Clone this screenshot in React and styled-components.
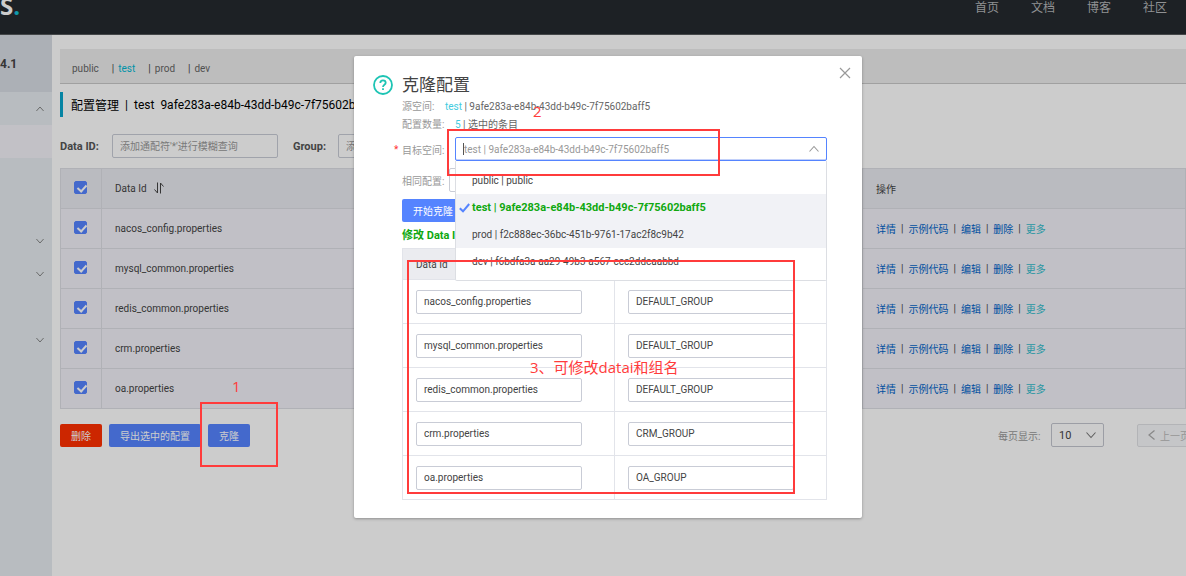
import React, { useState } from 'react'
import styled, { createGlobalStyle } from 'styled-components';

const NAV_LINKS = ['首页', '文档', '博客', '社区'];
const NAMESPACES = ['public', 'test', 'prod', 'dev'];
const SIDE_ITEMS = ['up', 'active', '', '', 'down', 'down', '', 'down'];
const ACTIONS = ['详情', '示例代码', '编辑', '删除'];
const TEST_ID = '9afe283a-e84b-43dd-b49c-7f75602baff5';

const CONFIGS = [
	{ dataId: 'nacos_config.properties', group: 'DEFAULT_GROUP' },
	{ dataId: 'mysql_common.properties', group: 'DEFAULT_GROUP' },
	{ dataId: 'redis_common.properties', group: 'DEFAULT_GROUP' },
	{ dataId: 'crm.properties', group: 'CRM_GROUP' },
	{ dataId: 'oa.properties', group: 'OA_GROUP' },
];

const TARGETS = [
	{ name: 'public', id: 'public' },
	{ name: 'test', id: TEST_ID },
	{ name: 'prod', id: 'f2c888ec-36bc-451b-9761-17ac2f8c9b42' },
	{ name: 'dev', id: 'f6bdfa3a-aa29-49b3-a567-ccc2ddcaabbd' },
];

const Chevron = ({ up, size = 8, color = '#999' }) => (
	<svg width={size} height={size} viewBox="0 0 10 10" fill="none" stroke={color} strokeWidth="1.1">
		<path d={up ? 'M0.5 7.5 5 2.5 9.5 7.5' : 'M0.5 2.5 5 7.5 9.5 2.5'} />
	</svg>
)

const SideMenu = () => (
	<Side>
		<Version>4.1</Version>
		{SIDE_ITEMS.map((kind, index) => (
			<SideItem key={index} $active={kind === 'active'}>
				{(kind === 'up' || kind === 'down') && <Chevron up={kind === 'up'} color="#777" />}
			</SideItem>
		))}
	</Side>
)

const ConfigTable = ({ checked, onToggle, onToggleAll }) => (
	<Table>
		<thead>
			<tr>
				<CheckHead>
					<Checkbox type="checkbox" aria-label="全选" checked={checked.every(Boolean)} onChange={onToggleAll} />
				</CheckHead>
				<th>
					<SortLabel>
						Data Id
						<svg width="10" height="12" viewBox="0 0 10 12" fill="none" stroke="#444" strokeWidth="1">
							<path d="M3.5 0.5V11L0.5 7.5M6.5 11.5V1L9.5 4.5" />
						</svg>
					</SortLabel>
				</th>
				<ActionHead>操作</ActionHead>
			</tr>
		</thead>
		<tbody>
			{CONFIGS.map((config, index) => (
				<tr key={config.dataId}>
					<td>
						<Checkbox type="checkbox" aria-label={config.dataId} checked={checked[index]} onChange={() => onToggle(index)} />
					</td>
					<td>{config.dataId}</td>
					<td>
						<Actions>
							{ACTIONS.map((action) => (
								<React.Fragment key={action}>
									<a href="#">{action}</a>
									<span>|</span>
								</React.Fragment>
							))}
							<a href="#" className="more">更多</a>
						</Actions>
					</td>
				</tr>
			))}
		</tbody>
	</Table>
)

const TargetSelect = ({ target, onSelect }) => (
	<SelectWrap>
		<SelectBox>
			<Caret />
			<SelectInput id="target" role="combobox" aria-expanded="true" aria-controls="target-list" placeholder={`test | ${TEST_ID}`} />
			<Chevron up size={10} />
		</SelectBox>
		<Menu role="listbox" id="target-list">
			{TARGETS.map(({ name, id }) => (
				<Option
					key={name}
					role="option"
					aria-selected={name === target}
					$selected={name === target}
					$hover={name === 'prod'}
					onClick={() => onSelect(name)}
				>
					<Tick>
						{name === target && (
							<svg width="11" height="10" viewBox="0 0 11 10" fill="none" stroke="#5584ff" strokeWidth="2">
								<path d="M0.8 5.2 4 8.3 10.2 1" />
							</svg>
						)}
					</Tick>
					{name} | {id}
				</Option>
			))}
		</Menu>
	</SelectWrap>
)

const CloneDialog = () => {
	const [target, setTarget] = useState('test');
	return (
		<Mask>
			<Dialog role="dialog" aria-labelledby="clone-title">
				<svg width="20" height="20" viewBox="0 0 20 20" fill="none" stroke="#1dc4b4" strokeWidth="1.8">
					<circle cx="10" cy="10" r="9" />
					<path d="M7.3 8c0-1.7 1.2-2.7 2.7-2.7s2.7 1 2.7 2.5c0 2-2.7 2-2.7 4.2M10 13.3v1.7" />
				</svg>
				<DialogBody>
					<DialogTitle id="clone-title">克隆配置</DialogTitle>
					<InfoRow>源空间: <em>test</em> <b>| {TEST_ID}</b></InfoRow>
					<InfoRow>配置数量: <em>5</em> <b>| 选中的条目</b></InfoRow>
					<Field>
						<Star>*</Star>
						<FieldLabel htmlFor="target" $wide>目标空间:</FieldLabel>
						<TargetSelect target={target} onSelect={setTarget} />
					</Field>
					<Field>
						<Star />
						<FieldLabel htmlFor="policy">相同配置:</FieldLabel>
						<PolicySelect id="policy" />
					</Field>
					<StartButton type="button">开始克隆</StartButton>
					<Hint>修改 Data Id 和 Group</Hint>
					<CloneTable>
						<thead>
							<tr>
								<th>Data Id</th>
								<th>Group</th>
							</tr>
						</thead>
						<tbody>
							{CONFIGS.map(({ dataId, group }) => (
								<tr key={dataId}>
									<td><TextInput aria-label={`Data Id ${dataId}`} defaultValue={dataId} /></td>
									<td><TextInput aria-label={`Group ${dataId}`} defaultValue={group} /></td>
								</tr>
							))}
						</tbody>
					</CloneTable>
				</DialogBody>
				<CloseButton type="button" aria-label="关闭">
					<svg width="12" height="12" viewBox="0 0 12 12" stroke="#999" strokeWidth="1.2">
						<path d="M1 1 11 11M11 1 1 11" />
					</svg>
				</CloseButton>
			</Dialog>
		</Mask>
	)
}

const App = () => {
	const [checked, setChecked] = useState(CONFIGS.map(() => true));

	const toggle = (index) => setChecked(checked.map((value, i) => (i === index ? !value : value)));
	const toggleAll = () => {
		const all = checked.every(Boolean);
		setChecked(checked.map(() => !all));
	}

	return (
		<Page>
			<GlobalStyle />
			<Header>
				<Logo>S<span>.</span></Logo>
				<Nav>
					{NAV_LINKS.map((link) => <a key={link} href="#">{link}</a>)}
				</Nav>
			</Header>
			<Content>
				<SideMenu />
				<Main>
					<NamespaceBar>
						{NAMESPACES.map((name, index) => (
							<React.Fragment key={name}>
								{index > 0 && <span>|</span>}
								<a href="#" className={name === 'test' ? 'current' : undefined}>{name}</a>
							</React.Fragment>
						))}
					</NamespaceBar>
					<Title>
						<span>配置管理</span><i>|</i><span>test</span><span>{TEST_ID}</span>
					</Title>
					<Filters>
						<FilterLabel htmlFor="dataId">Data ID:</FilterLabel>
						<TextInput id="dataId" placeholder="添加通配符'*'进行模糊查询" />
						<FilterLabel htmlFor="group">Group:</FilterLabel>
						<TextInput id="group" placeholder="添加通配符'*'进行模糊查询" />
					</Filters>
					<ConfigTable checked={checked} onToggle={toggle} onToggleAll={toggleAll} />
					<Toolbar>
						<Button type="button" $warning>删除</Button>
						<Button type="button">导出选中的配置</Button>
						<Button type="button">克隆</Button>
						<Pager>
							<label htmlFor="pageSize">每页显示:</label>
							<PageSize>
								<select id="pageSize" defaultValue="10">
									<option>10</option>
									<option>20</option>
								</select>
								<Chevron size={10} color="#777" />
							</PageSize>
							<PrevButton type="button" disabled>
								<svg width="7" height="10" viewBox="0 0 7 10" fill="none" stroke="#aaa" strokeWidth="1.2">
									<path d="M6.5 0.5 1 5 6.5 9.5" />
								</svg>
								上一页
							</PrevButton>
						</Pager>
					</Toolbar>
				</Main>
			</Content>
			<CloneDialog />

			{/* numbered steps drawn over the page */}
			<Mark $x={200} $y={402} $w={78} $h={65} />
			<Mark $x={447} $y={129} $w={273} $h={47} />
			<Mark $x={407} $y={260} $w={388} $h={234} />
			<Note $x={232} $y={376}>1</Note>
			<Note $x={533} $y={101}>2</Note>
			<Note $x={530} $y={357}>3、可修改datai和组名</Note>
		</Page>
	)
}

export default App

const GlobalStyle = createGlobalStyle`
	* {
		box-sizing: border-box;
	}
	body {
		margin: 0;
		overflow: hidden;
	}
	body, button, input, select {
		font-family: Roboto, "Noto Sans CJK SC", sans-serif;
		font-size: 10px;
		color: #444;
	}
	a {
		text-decoration: none;
	}
	svg {
		flex: none;
	}
`

const Page = styled.div`
	position: relative;
	display: flex;
	flex-direction: column;
	min-height: 100vh;
	background: #fff;
`

const Header = styled.header`
	display: flex;
	justify-content: space-between;
	height: 35px;
	background: #252a2f;
	border-bottom: 1px solid #56595c;
	overflow: hidden;
`

const Logo = styled.div`
	font-family: "Open Sans", sans-serif;
	font-size: 24px;
	line-height: 12px;
	font-weight: 700;
	color: #fff;
	span {
		color: #14c0d8;
	}
`

const Nav = styled.nav`
	display: flex;
	gap: 32px;
	padding-right: 19px;
	a {
		font-size: 12px;
		line-height: 16px;
		color: #b4b6b8;
	}
`

const Content = styled.div`
	display: flex;
	flex: 1;
`

const Side = styled.aside`
	flex: none;
	width: 52px;
	background: #e7ecf0;
`

const Version = styled.div`
	height: 57px;
	line-height: 58px;
	font-size: 12px;
	font-weight: 700;
	background: #d7dce4;
`

const SideItem = styled.div`
	display: flex;
	align-items: center;
	justify-content: flex-end;
	height: 33px;
	padding-right: 8px;
	background: ${({ $active }) => ($active ? '#f3f2f8' : 'transparent')};
`

const Main = styled.main`
	flex: 1;
	min-width: 0;
	padding: 14px 0 0 8px;
`

const NamespaceBar = styled.div`
	display: flex;
	align-items: center;
	height: 35px;
	padding: 4px 12px 0;
	background: #ededed;
	border-bottom: 1px solid #c8c8c8;
	a {
		margin-right: 13px;
		color: #666;
		&.current {
			color: #00b7d3;
		}
	}
	span {
		margin-right: 4px;
		color: #444;
	}
`

const Title = styled.h1`
	display: flex;
	align-items: center;
	gap: 6px;
	height: 25px;
	margin: 8px 0 17px;
	padding-left: 8px;
	border-left: 3px solid #08a5cc;
	font-size: 12px;
	font-weight: 400;
	color: #000;
	white-space: nowrap;
	overflow: hidden;
	i {
		font-style: normal;
	}
`

const Filters = styled.div`
	display: flex;
	align-items: center;
	margin-bottom: 10px;
`

const FilterLabel = styled.label`
	width: 52px;
	font-size: 11px;
	font-weight: 700;
	color: #555;
	input + & {
		width: 60px;
		padding-left: 15px;
	}
`

const TextInput = styled.input`
	width: 166px;
	height: 24px;
	padding: 0 7px;
	border: 1px solid #c9ccd6;
	border-radius: 2px;
	background: transparent;
	outline: none;
	&::placeholder {
		color: #999;
	}
`

const Table = styled.table`
	width: 100%;
	table-layout: fixed;
	border-collapse: collapse;
	background: #f2f1f8;
	th, td {
		height: 40px;
		padding: 0 13px 1px;
		border: 1px solid #dddee4;
		font-weight: 400;
		text-align: left;
	}
	th {
		background: #e9eaf0;
	}
`

const CheckHead = styled.th`
	width: 41px;
`

const ActionHead = styled.th`
	width: 323px;
`

const Checkbox = styled.input`
	display: block;
	appearance: none;
	width: 13px;
	height: 13px;
	margin: 0 0 2px;
	border: 1px solid #c4c6cf;
	border-radius: 2px;
	background: #fff;
	&:checked {
		border-color: #5584ff;
		background: #5584ff;
	}
	&:checked::after {
		content: '';
		display: block;
		width: 4px;
		height: 7px;
		margin: 1px 0 0 4px;
		border: solid #fff;
		border-width: 0 2px 2px 0;
		transform: rotate(42deg);
	}
`

const SortLabel = styled.span`
	display: flex;
	align-items: center;
	gap: 7px;
`

const Actions = styled.div`
	display: flex;
	align-items: center;
	gap: 5px;
	a {
		color: #0064c8;
	}
	a.more {
		color: #33bccc;
	}
`

const Toolbar = styled.div`
	display: flex;
	align-items: center;
	gap: 7px;
	margin-top: 14px;
`

const Button = styled.button`
	height: 23px;
	padding: 0 11px;
	border: 0;
	border-radius: 2px;
	color: #fff;
	background: ${({ $warning }) => ($warning ? '#ff3000' : '#5584ff')};
	white-space: nowrap;
`

const Pager = styled.div`
	display: flex;
	align-items: center;
	width: 188px;
	margin-left: auto;
	overflow: hidden;
	color: #999;
	white-space: nowrap;
	label {
		flex: none;
		width: 53px;
	}
`

const PageSize = styled.div`
	display: flex;
	align-items: center;
	flex: none;
	width: 53px;
	height: 24px;
	margin-right: 33px;
	padding: 0 7px;
	border: 1px solid #c4c6cf;
	border-radius: 2px;
	select {
		flex: 1;
		min-width: 0;
		padding: 0;
		border: 0;
		background: transparent;
		appearance: none;
		font-size: 11px;
	}
`

const PrevButton = styled.button`
	display: flex;
	align-items: center;
	flex: none;
	gap: 5px;
	height: 23px;
	padding: 0 10px;
	border: 1px solid #e0e1e5;
	border-radius: 2px;
	background: #f7f8fa;
	color: #bbb;
`

const Mask = styled.div`
	position: absolute;
	inset: 0;
	display: flex;
	justify-content: center;
	align-items: flex-start;
	padding: 56px 0 0 30px;
	background: rgba(0, 0, 0, 0.2);
`

const Dialog = styled.div`
	position: relative;
	display: flex;
	gap: 9px;
	width: 508px;
	padding: 19px 35px 18px 19px;
	border-radius: 2px;
	background: #fff;
	box-shadow: 0 1px 3px rgba(0, 0, 0, 0.3);
`

const DialogBody = styled.div`
	flex: 1;
	min-width: 0;
`

const DialogTitle = styled.h2`
	margin: 0 0 3px;
	font-size: 17px;
	line-height: 20px;
	font-weight: 400;
`

const InfoRow = styled.p`
	margin: 0;
	line-height: 18px;
	color: #999;
	em {
		margin-left: 8px;
		font-style: normal;
		color: #42cbe0;
	}
	b {
		font-weight: 400;
		color: #666;
	}
`

const Field = styled.div`
	display: flex;
	align-items: center;
	margin: 3px 0 7px -8px;
`

const Star = styled.span`
	width: 8px;
	color: #ff3333;
`

const FieldLabel = styled.label`
	flex: none;
	width: ${({ $wide }) => ($wide ? 53 : 47)}px;
	color: #999;
`

const SelectWrap = styled.div`
	position: relative;
	flex: 1;
`

const SelectBox = styled.div`
	display: flex;
	align-items: center;
	height: 24px;
	padding: 0 7px;
	border: 1px solid #5584ff;
	border-radius: 2px;
	box-shadow: inset 0 -1px 0 #c2d0fa;
`

const Caret = styled.span`
	width: 1px;
	height: 12px;
	background: #555;
`

const SelectInput = styled.input`
	flex: 1;
	padding: 0;
	border: 0;
	background: transparent;
	outline: none;
	&::placeholder {
		color: #999;
	}
`

const Menu = styled.ul`
	position: absolute;
	top: 24px;
	left: 0;
	right: 0;
	z-index: 1;
	margin: 0;
	padding: 6px 0 5px;
	border: 1px solid #dcdee3;
	border-top: 0;
	border-radius: 0 0 2px 2px;
	background: #fff;
	list-style: none;
`

const Option = styled.li`
	display: flex;
	align-items: center;
	height: 27px;
	padding-left: 3px;
	white-space: pre;
	font-size: ${({ $selected }) => ($selected ? 11 : 10)}px;
	font-weight: ${({ $selected }) => ($selected ? 700 : 400)};
	color: ${({ $selected }) => ($selected ? '#0fa80f' : '#444')};
	background: ${({ $selected, $hover }) => ($selected || $hover ? '#f1f2f6' : '#fff')};
`

const Tick = styled.span`
	display: flex;
	width: 13px;
`

const PolicySelect = styled.select`
	flex: 1;
	height: 24px;
	border: 1px solid #c9ccd6;
	border-radius: 2px;
	background: #fff;
	appearance: none;
`

const StartButton = styled(Button)`
	display: block;
	margin-bottom: 6px;
`

const Hint = styled.p`
	margin: 0 0 4px;
	font-size: 11px;
	line-height: 16px;
	font-weight: 700;
	color: #0fa80f;
`

const CloneTable = styled.table`
	width: 100%;
	table-layout: fixed;
	border-collapse: collapse;
	th, td {
		height: 44px;
		padding: 0 13px;
		border: 1px solid #e2e4ea;
		font-weight: 400;
		text-align: left;
	}
	th {
		height: 31px;
		background: #ebecf0;
	}
`

const CloseButton = styled.button`
	position: absolute;
	top: 10px;
	right: 10px;
	display: flex;
	padding: 1px;
	border: 0;
	background: none;
`

const Mark = styled.div`
	position: absolute;
	z-index: 2;
	left: ${({ $x }) => $x}px;
	top: ${({ $y }) => $y}px;
	width: ${({ $w }) => $w}px;
	height: ${({ $h }) => $h}px;
	border: 2px solid #ff3b3b;
	pointer-events: none;
`

const Note = styled.span`
	position: absolute;
	z-index: 2;
	left: ${({ $x }) => $x}px;
	top: ${({ $y }) => $y}px;
	font-family: "Open Sans", "Noto Sans CJK SC", sans-serif;
	font-size: 15px;
	line-height: 20px;
	color: #ff3b3b;
`
